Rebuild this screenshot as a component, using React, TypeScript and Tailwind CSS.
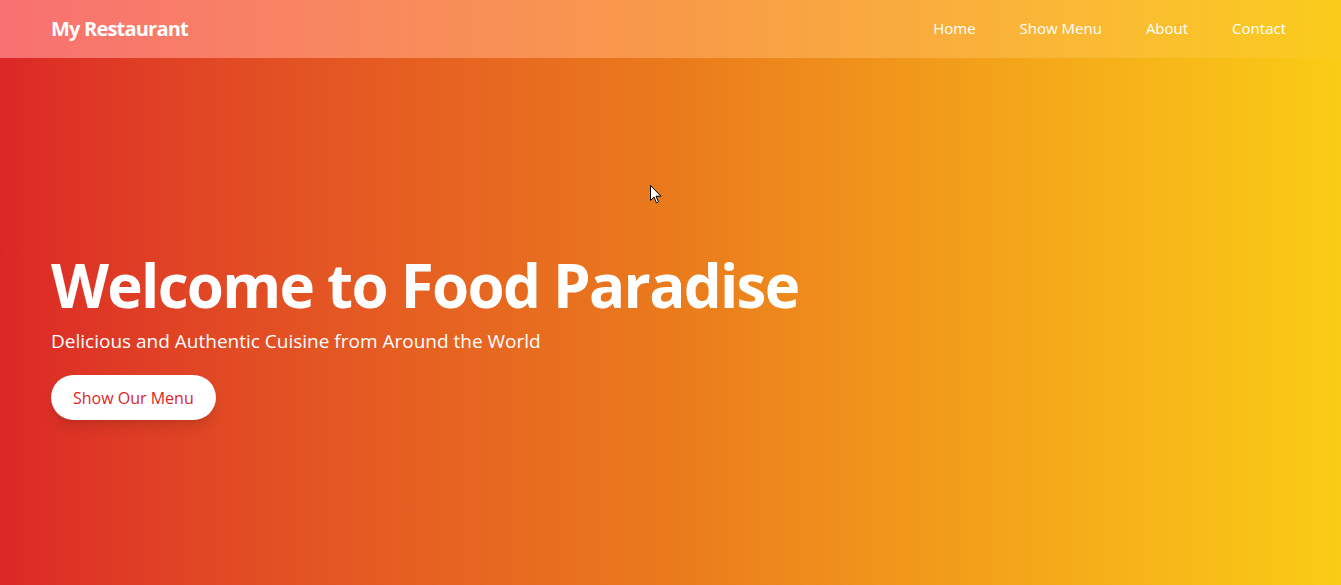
import React from "react";

export default function App() {
  return (
    <div
      className="relative w-full h-[585px] overflow-hidden bg-gradient-to-r from-[#dc2626] via-[#ea7a1c] to-[#facc15] text-white"
      style={{ fontFamily: '"Open Sans", "Noto Sans", sans-serif' }}
    >
      <nav className="h-[58px] flex items-center justify-between pl-[51px] pr-[55px] bg-gradient-to-r from-[#f87171] via-[#f89a48] to-[#facc1a]">
        <div className="text-[20px] font-bold tracking-[-0.8px]">My Restaurant</div>
        <ul className="flex items-center gap-[44px] text-[15px] pb-[2px]">
          <li>Home</li>
          <li>Show Menu</li>
          <li>About</li>
          <li>Contact</li>
        </ul>
      </nav>
      <section className="pl-[51px] pt-[192px]">
        <h1 className="text-[60px] leading-[70px] font-bold tracking-[-1.7px]">Welcome to Food Paradise</h1>
        <p className="mt-[7px] text-[19px] leading-[28px]">Delicious and Authentic Cuisine from Around the World</p>
        <button className="mt-[20px] h-[45px] px-[22px] rounded-full bg-white text-[#dc2626] text-[16px] shadow-lg">
          Show Our Menu
        </button>
      </section>
      <svg className="absolute left-[650px] top-[185px]" width="12" height="19" viewBox="0 0 12 19">
        <path d="M0.5 0.5 L0.5 15.5 L4 12 L6.5 18 L8.5 17 L6 11.2 L11 11.2 Z" fill="white" stroke="black" strokeWidth="1" />
      </svg>
    </div>
  );
}
